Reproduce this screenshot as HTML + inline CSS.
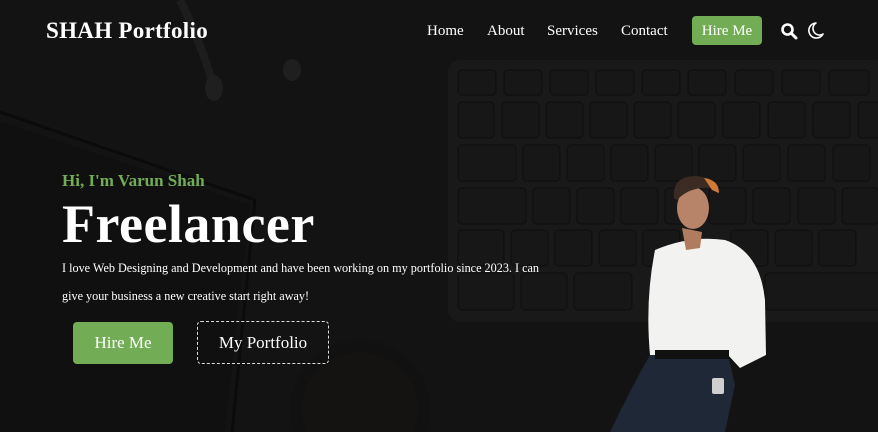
<!DOCTYPE html>
<html><head><meta charset="utf-8"><style>
*{margin:0;padding:0;box-sizing:border-box}
html,body{width:878px;height:432px;overflow:hidden}
body{background:#131313;font-family:"Liberation Serif",serif;position:relative;color:#fff}
.abs{position:absolute}
.logo{left:46px;top:18px;font-size:23px;font-weight:bold;letter-spacing:.3px}
.nav{top:22px;font-size:15px}
.hire{left:692px;top:16px;width:70px;height:29px;background:#72ad56;border-radius:4px;font-size:15px;text-align:center;line-height:29px}
.hi{left:62px;top:171px;color:#72ad56;font-size:17px;font-weight:bold}
.big{left:62px;top:193px;font-size:54px;font-weight:bold;letter-spacing:.5px}
.p{left:62px;top:254px;font-size:12.2px;line-height:28px;white-space:nowrap}
.b1{left:73px;top:322px;width:100px;height:42px;background:#72ad56;border-radius:4px;font-size:17px;text-align:center;line-height:42px}
.b2{left:197px;top:321px;width:132px;height:43px;border:1.5px dashed #ddd;border-radius:4px;font-size:17px;text-align:center;line-height:42px}
</style></head><body>
<svg class="abs" style="left:0;top:0" width="878" height="432">
<rect x="448" y="60" width="440" height="262" rx="12" fill="#191919"/>
<g fill="#171717" stroke="#101010" stroke-width="1.2">
<rect x="458" y="70" width="38" height="25" rx="4"/><rect x="504" y="70" width="38" height="25" rx="4"/><rect x="550" y="70" width="38" height="25" rx="4"/><rect x="596" y="70" width="38" height="25" rx="4"/><rect x="642" y="70" width="38" height="25" rx="4"/><rect x="688" y="70" width="38" height="25" rx="4"/><rect x="735" y="70" width="38" height="25" rx="4"/><rect x="782" y="70" width="38" height="25" rx="4"/><rect x="829" y="70" width="40" height="25" rx="4"/>
<rect x="458" y="102" width="36" height="36" rx="4"/><rect x="502" y="102" width="37" height="36" rx="4"/><rect x="546" y="102" width="37" height="36" rx="4"/><rect x="590" y="102" width="37" height="36" rx="4"/><rect x="634" y="102" width="37" height="36" rx="4"/><rect x="678" y="102" width="37" height="36" rx="4"/><rect x="723" y="102" width="37" height="36" rx="4"/><rect x="768" y="102" width="37" height="36" rx="4"/><rect x="813" y="102" width="37" height="36" rx="4"/><rect x="858" y="102" width="30" height="36" rx="4"/>
<rect x="458" y="145" width="58" height="36" rx="4"/><rect x="523" y="145" width="37" height="36" rx="4"/><rect x="567" y="145" width="37" height="36" rx="4"/><rect x="611" y="145" width="37" height="36" rx="4"/><rect x="655" y="145" width="37" height="36" rx="4"/><rect x="699" y="145" width="37" height="36" rx="4"/><rect x="743" y="145" width="37" height="36" rx="4"/><rect x="788" y="145" width="37" height="36" rx="4"/><rect x="833" y="145" width="37" height="36" rx="4"/>
<rect x="458" y="188" width="68" height="36" rx="4"/><rect x="533" y="188" width="37" height="36" rx="4"/><rect x="577" y="188" width="37" height="36" rx="4"/><rect x="621" y="188" width="37" height="36" rx="4"/><rect x="665" y="188" width="37" height="36" rx="4"/><rect x="709" y="188" width="37" height="36" rx="4"/><rect x="753" y="188" width="37" height="36" rx="4"/><rect x="798" y="188" width="37" height="36" rx="4"/><rect x="842" y="188" width="37" height="36" rx="4"/>
<rect x="458" y="230" width="46" height="36" rx="4"/><rect x="511" y="230" width="37" height="36" rx="4"/><rect x="555" y="230" width="37" height="36" rx="4"/><rect x="599" y="230" width="37" height="36" rx="4"/><rect x="643" y="230" width="37" height="36" rx="4"/><rect x="731" y="230" width="37" height="36" rx="4"/><rect x="775" y="230" width="37" height="36" rx="4"/><rect x="819" y="230" width="37" height="36" rx="4"/>
<rect x="458" y="273" width="56" height="37" rx="4"/><rect x="521" y="273" width="46" height="37" rx="4"/><rect x="574" y="273" width="58" height="37" rx="4"/><rect x="765" y="273" width="120" height="37" rx="4"/>
</g>
<path d="M-10 118 L250 205 L225 432 L-10 432Z" fill="#101010"/>
<path d="M0 112 L255 200 L232 432" fill="none" stroke="#0b0b0b" stroke-width="3"/>
<circle cx="360" cy="410" r="70" fill="#111"/>
<circle cx="360" cy="410" r="58" fill="#151311"/>
<path d="M180 0 Q200 40 215 90" stroke="#1d1d1d" stroke-width="8" fill="none"/>
<ellipse cx="214" cy="88" rx="9" ry="13" fill="#1f1f1f"/><ellipse cx="292" cy="70" rx="9" ry="11" fill="#1f1f1f"/>
<!-- person -->
<path d="M655 250 Q690 235 725 240 Q760 252 765 300 L766 355 L740 368 L728 355 L650 355 Q645 300 655 250Z" fill="#f2f2f0"/>
<path d="M650 355 L728 355 L735 385 L725 432 L610 432 Q630 390 650 355Z" fill="#1f2836"/>
<rect x="655" y="350" width="74" height="9" fill="#111"/>
<rect x="712" y="378" width="12" height="16" rx="2" fill="#cfcfcf"/>
<path d="M682 228 L702 232 L700 248 L686 250Z" fill="#b07c60"/>
<ellipse cx="693" cy="208" rx="16" ry="21" fill="#b7846a"/>
<path d="M674 198 Q672 176 696 176 Q719 178 718 194 L712 188 Q690 186 677 200Z" fill="#3b2b22"/>
<path d="M704 178 Q719 180 719 193 L712 190Z" fill="#d07a3a"/>
</svg>
<div class="abs logo">SHAH Portfolio</div>
<div class="abs nav" style="left:427px;top:23px">Home</div>
<div class="abs nav" style="left:487px;top:23px">About</div>
<div class="abs nav" style="left:547px;top:23px">Services</div>
<div class="abs nav" style="left:621px;top:23px">Contact</div>
<div class="abs hire" style="line-height:31px">Hire Me</div>
<svg class="abs" style="left:780px;top:22px" width="18" height="18" viewBox="0 0 18 18"><circle cx="7.5" cy="7.5" r="5" fill="none" stroke="#fff" stroke-width="2.6"/><path d="M11 11 L16 16" stroke="#fff" stroke-width="3" stroke-linecap="round"/></svg>
<svg class="abs" style="left:807px;top:21px" width="18" height="19" viewBox="0 0 18 19"><path d="M9 2 A7.5 7.5 0 1 0 16 13 A6 6 0 0 1 9 2Z" fill="none" stroke="#fff" stroke-width="1.6" stroke-linejoin="round"/></svg>
<div class="abs hi">Hi, I'm Varun Shah</div>
<div class="abs big">Freelancer</div>
<div class="abs p">I love Web Designing and Development and have been working on my portfolio since 2023. I can<br>give your business a new creative start right away!</div>
<div class="abs b1">Hire Me</div>
<div class="abs b2">My Portfolio</div>
</body></html>
